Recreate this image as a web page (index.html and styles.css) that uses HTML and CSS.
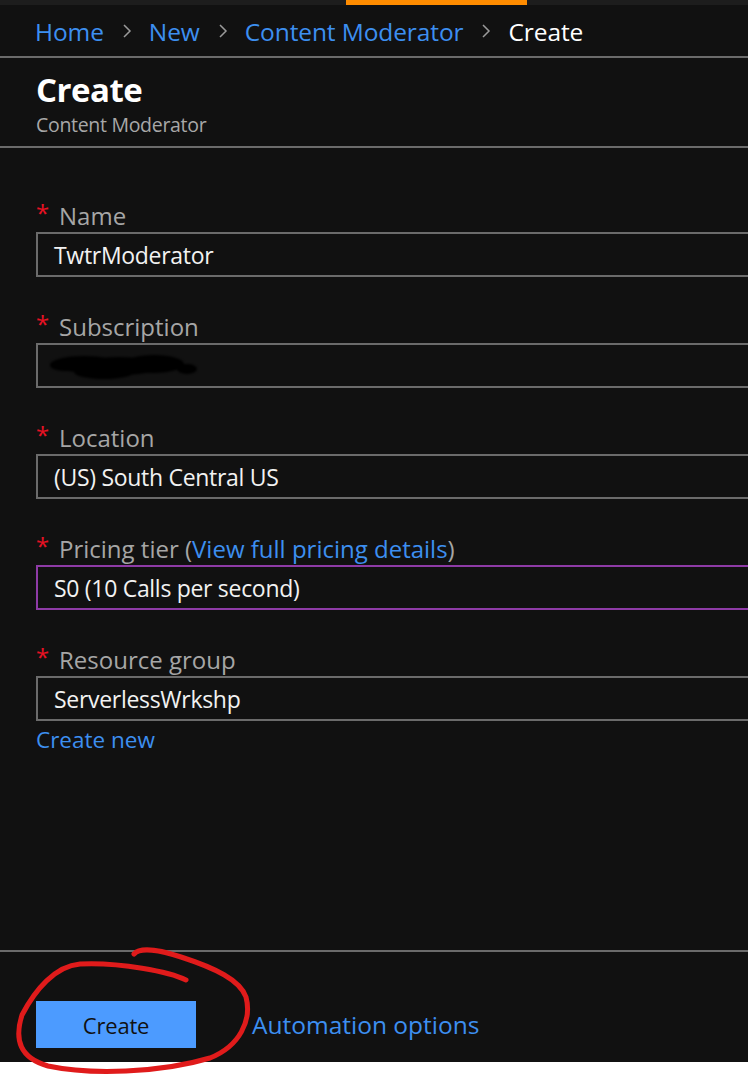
FILE: index.html
```html
<!DOCTYPE html>
<html>
<head>
<meta charset="utf-8">
<link rel="stylesheet" href="styles.css">
</head>
<body>
<div class="panel">
  <div class="topbar"><div class="topbar-active"></div></div>
  <nav class="breadcrumb">
    <a class="crumb">Home</a>
    <svg class="sep" width="10" height="16" viewBox="0 0 10 16"><path d="M2 2 L8 8 L2 14" fill="none" stroke="#9a9a9a" stroke-width="1.5"/></svg>
    <a class="crumb">New</a>
    <svg class="sep" width="10" height="16" viewBox="0 0 10 16"><path d="M2 2 L8 8 L2 14" fill="none" stroke="#9a9a9a" stroke-width="1.5"/></svg>
    <a class="crumb">Content Moderator</a>
    <svg class="sep" width="10" height="16" viewBox="0 0 10 16"><path d="M2 2 L8 8 L2 14" fill="none" stroke="#9a9a9a" stroke-width="1.5"/></svg>
    <span class="crumb current">Create</span>
  </nav>
  <header class="titlebar">
    <h1 class="title">Create</h1>
    <div class="subtitle">Content Moderator</div>
  </header>
  <main class="form">
    <div class="field">
      <div class="label"><span class="req">*</span>Name</div>
      <div class="input">TwtrModerator</div>
    </div>
    <div class="field">
      <div class="label"><span class="req">*</span>Subscription</div>
      <div class="input redacted-box">
        <svg class="redact" width="160" height="34" viewBox="0 0 160 34">
          <g fill="#000">
            <ellipse cx="40" cy="15" rx="32" ry="8"/>
            <ellipse cx="75" cy="17" rx="45" ry="9"/>
            <ellipse cx="110" cy="15" rx="30" ry="9"/>
            <ellipse cx="60" cy="23" rx="30" ry="7"/>
            <ellipse cx="143" cy="20" rx="10" ry="5"/>
            <ellipse cx="20" cy="16" rx="14" ry="6"/>
          </g>
        </svg>
      </div>
    </div>
    <div class="field">
      <div class="label"><span class="req">*</span>Location</div>
      <div class="input">(US) South Central US</div>
    </div>
    <div class="field">
      <div class="label"><span class="req">*</span>Pricing tier (<a class="link">View full pricing details</a>)</div>
      <div class="input focused">S0 (10 Calls per second)</div>
    </div>
    <div class="field last">
      <div class="label"><span class="req">*</span>Resource group</div>
      <div class="input">ServerlessWrkshp</div>
      <a class="link create-new">Create new</a>
    </div>
  </main>
  <footer class="footer">
    <button class="primary">Create</button>
    <a class="link automation">Automation options</a>
  </footer>
  <svg class="annotation" width="748" height="1078" viewBox="0 0 748 1078">
    <path d="M186,980 C170,972 120,962 80,964 C55,966 35,990 22,1015 C14,1040 20,1058 48,1066 C90,1075 160,1073 210,1058 C240,1046 252,1020 246,997 C240,980 215,968 181,957 C160,950 140,947 134,954" fill="none" stroke="#e01b1b" stroke-width="5" stroke-linecap="round"/>
  </svg>
</div>
</body>
</html>
```
FILE: styles.css
```css
html, body {
  margin: 0;
  padding: 0;
  background: #ffffff;
  overflow: hidden;
}
body {
  width: 748px;
  height: 1078px;
  font-family: "Open Sans", "Noto Sans", sans-serif;
}
.panel {
  height: 1062px;
  background: #111111;
  display: flex;
  flex-direction: column;
  position: relative;
}
.topbar {
  height: 5px;
  background: #1d1d1d;
  display: flex;
  flex-shrink: 0;
}
.topbar-active {
  margin-left: 346px;
  width: 181px;
  background: #ff8c00;
}
.breadcrumb {
  height: 53px;
  box-sizing: border-box;
  padding-left: 35px;
  padding-top: 1px;
  display: flex;
  align-items: center;
  border-bottom: 2px solid #6b6b6b;
  flex-shrink: 0;
  font-size: 24.5px;
  white-space: nowrap;
}
.crumb {
  color: #3d8ff0;
  letter-spacing: -0.1px;
}
.crumb.current {
  color: #ffffff;
}
.sep {
  margin: 0 17px 0 18px;
  flex-shrink: 0;
}
.titlebar {
  height: 90px;
  box-sizing: border-box;
  padding: 9px 0 0 36px;
  border-bottom: 2px solid #6b6b6b;
  flex-shrink: 0;
}
.title {
  margin: 0;
  font-size: 33px;
  font-weight: 700;
  color: #ffffff;
  line-height: 46px;
  letter-spacing: -0.5px;
}
.subtitle {
  font-size: 19.5px;
  color: #a8a8a8;
  line-height: 24px;
  letter-spacing: -0.3px;
}
.form {
  flex: 1;
  padding: 53px 0 0 36px;
  overflow: hidden;
}
.field {
  margin-bottom: 35px;
}
.label {
  display: flex;
  align-items: center;
  height: 28px;
  margin-bottom: 3px;
  font-size: 24px;
  color: #a6a6a6;
  white-space: nowrap;
  letter-spacing: 0;
}
.req {
  color: #e81123;
  width: 12px;
  margin-right: 11px;
  font-size: 24px;
  line-height: 24px;
  align-self: flex-start;
}
.link {
  color: #3d8ff0;
}
.input {
  width: 760px;
  height: 45px;
  box-sizing: border-box;
  border: 2px solid #6b6b6b;
  padding-left: 16px;
  display: flex;
  align-items: center;
  color: #f2f2f2;
  font-size: 23px;
  letter-spacing: -0.3px;
  white-space: nowrap;
}
.input.focused {
  border-color: #8e3ba6;
}
.redacted-box {
  position: relative;
}
.redact {
  position: absolute;
  left: 6px;
  top: 4px;
  filter: blur(1px);
}
.create-new {
  display: block;
  margin-top: 5px;
  line-height: 28px;
  font-size: 22.5px;
  letter-spacing: 0;
}
.footer {
  height: 112px;
  box-sizing: border-box;
  border-top: 2px solid #6b6b6b;
  padding: 49px 0 0 36px;
  display: flex;
  align-items: flex-start;
  gap: 56px;
  flex-shrink: 0;
}
.primary {
  width: 160px;
  height: 47px;
  border: none;
  background: #4c9bff;
  color: #111111;
  font-family: inherit;
  font-size: 22px;
  letter-spacing: -0.2px;
  padding: 0;
}
.automation {
  font-size: 24.5px;
  line-height: 47px;
  letter-spacing: 0;
}
.annotation {
  position: absolute;
  left: 0;
  top: 0;
  pointer-events: none;
}
```
